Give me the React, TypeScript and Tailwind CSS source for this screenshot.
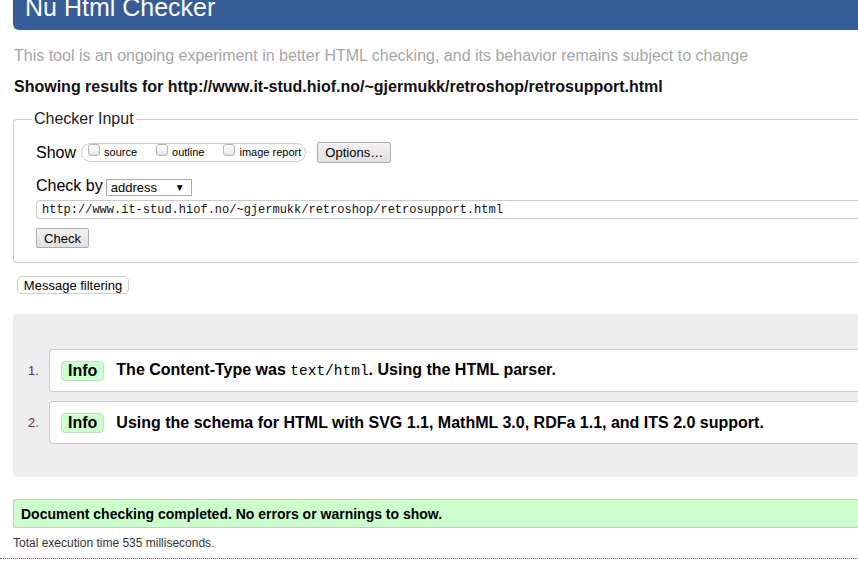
import React from "react";

const Checkbox = () => (
  <span className="block h-[12px] w-[12px] shrink-0 self-start rounded-[3px] border border-[#b4b4b4] bg-linear-to-b from-[#ffffff] to-[#e6e6e6]" />
);

const ShowOption = ({ label }: { label: string }) => (
  <div className="flex h-full items-center gap-[4px]">
    <Checkbox />
    <span className="text-[11px] leading-[13px]">{label}</span>
  </div>
);

const GrayButton = ({
  children,
  className = "",
}: {
  children: React.ReactNode;
  className?: string;
}) => (
  <div
    className={`flex items-center justify-center rounded-[2px] border border-[#adadad] bg-linear-to-b from-[#f2f2f2] to-[#e0e0e0] text-[13px] leading-[15px] text-black ${className}`}
  >
    {children}
  </div>
);

const Message = ({
  n,
  children,
}: {
  n: number;
  children: React.ReactNode;
}) => (
  <div className="flex items-center">
    <span className="w-[36px] shrink-0 pl-[15px] text-[13px] leading-[15px] text-[#6e2b2b]">
      {n}.
    </span>
    <div className="flex h-[43px] flex-1 items-center rounded-l-[4px] border border-r-0 border-[#cccccc] bg-white pl-[11px]">
      <span className="flex h-[20px] items-center rounded-[4px] border border-[#bfe3bf] bg-[#ccffcc] px-[6px] text-[16px] font-bold leading-[18px]">
        Info
      </span>
      <span className="ml-[12px] text-[16px] font-bold leading-[20px] text-black">
        {children}
      </span>
    </div>
  </div>
);

export default function App() {
  return (
    <div className="h-[571px] w-full overflow-hidden bg-white font-['Liberation_Sans',Arial,sans-serif] text-black">
      <div className="w-[1000px]">
        <div className="pl-[13px]">
          {/* Header */}
          <div className="-mt-[14px] h-[44px] rounded-bl-[6px] bg-[#365d95] pl-[12px] pt-[9px] text-[25px] leading-[25px] text-white">
            Nu Html Checker
          </div>

          <p className="ml-px mt-[16px] text-[16px] leading-[20px] text-[#a6a6a6]">
            This tool is an ongoing experiment in better HTML checking, and its
            behavior remains subject to change
          </p>

          <p className="ml-px mt-[11px] text-[16px] font-bold leading-[20px] text-[#111]">
            Showing results for
            http://www.it-stud.hiof.no/~gjermukk/retroshop/retrosupport.html
          </p>

          {/* Checker input */}
          <fieldset className="mt-[12px] rounded-l-[4px] border border-r-0 border-[#cccccc]">
            <legend className="ml-[18px] px-[2px] text-[16px] leading-[20px] text-[#222]">
              Checker Input
            </legend>

            <div className="pb-[14px] pl-[22px] pt-[13px]">
              <div className="flex h-[21px] items-center">
                <span className="text-[16px] leading-[20px]">Show</span>
                <div className="ml-[5px] flex h-[19px] items-stretch gap-[19px] rounded-full border border-[#cccccc] pl-[6px] pr-[4px]">
                  <ShowOption label="source" />
                  <ShowOption label="outline" />
                  <ShowOption label="image report" />
                </div>
                <GrayButton className="ml-[11px] h-[21px] w-[74px]">
                  Options…
                </GrayButton>
              </div>

              <div className="mt-[13px] flex h-[20px] items-end">
                <span className="text-[16px] leading-[20px]">Check by</span>
                <div className="ml-[3px] flex h-[17px] w-[86px] items-center justify-between border border-[#a9a9a9] bg-white pl-[4px] pr-[6px] text-[13px] leading-[15px]">
                  <span>address</span>
                  <span className="text-[10px] leading-[12px]">▼</span>
                </div>
              </div>

              <div className="mt-[4px] flex h-[19px] items-center rounded-l-[4px] border border-r-0 border-[#cccccc] bg-white pl-[5px] pt-px font-['Liberation_Mono',monospace] text-[12px] leading-[14px] text-[#111]">
                http://www.it-stud.hiof.no/~gjermukk/retroshop/retrosupport.html
              </div>

              <GrayButton className="mt-[9px] h-[20px] w-[53px]">Check</GrayButton>
            </div>
          </fieldset>

          <div className="ml-[4px] mt-[13px] flex h-[18px] w-[112px] items-center justify-center rounded-[5px] border border-[#cccccc] bg-white text-[13px] leading-[15px]">
            Message filtering
          </div>

          {/* Results */}
          <div className="mt-[20px] flex flex-col gap-[9px] rounded-l-[4px] bg-[#eeeeee] pb-[33px] pt-[35px]">
            <Message n={1}>
              The Content-Type was{" "}
              <code className="font-['Liberation_Mono',monospace] text-[14.5px] font-normal">
                text/html
              </code>
              . Using the HTML parser.
            </Message>
            <Message n={2}>
              Using the schema for HTML with SVG 1.1, MathML 3.0, RDFa 1.1, and
              ITS 2.0 support.
            </Message>
          </div>

          <div className="mt-[22px] flex h-[29px] items-center rounded-l-[3px] border border-r-0 border-[#c8c8c8] bg-[#ccffcc] pl-[7px] text-[14px] font-bold leading-[16px]">
            Document checking completed. No errors or warnings to show.
          </div>

          <p className="mt-[8px] text-[12px] leading-[14px] text-[#333]">
            Total execution time 535 milliseconds.
          </p>
        </div>

        <div className="mt-[8px] border-t border-dotted border-[#666]" />
      </div>
    </div>
  );
}
